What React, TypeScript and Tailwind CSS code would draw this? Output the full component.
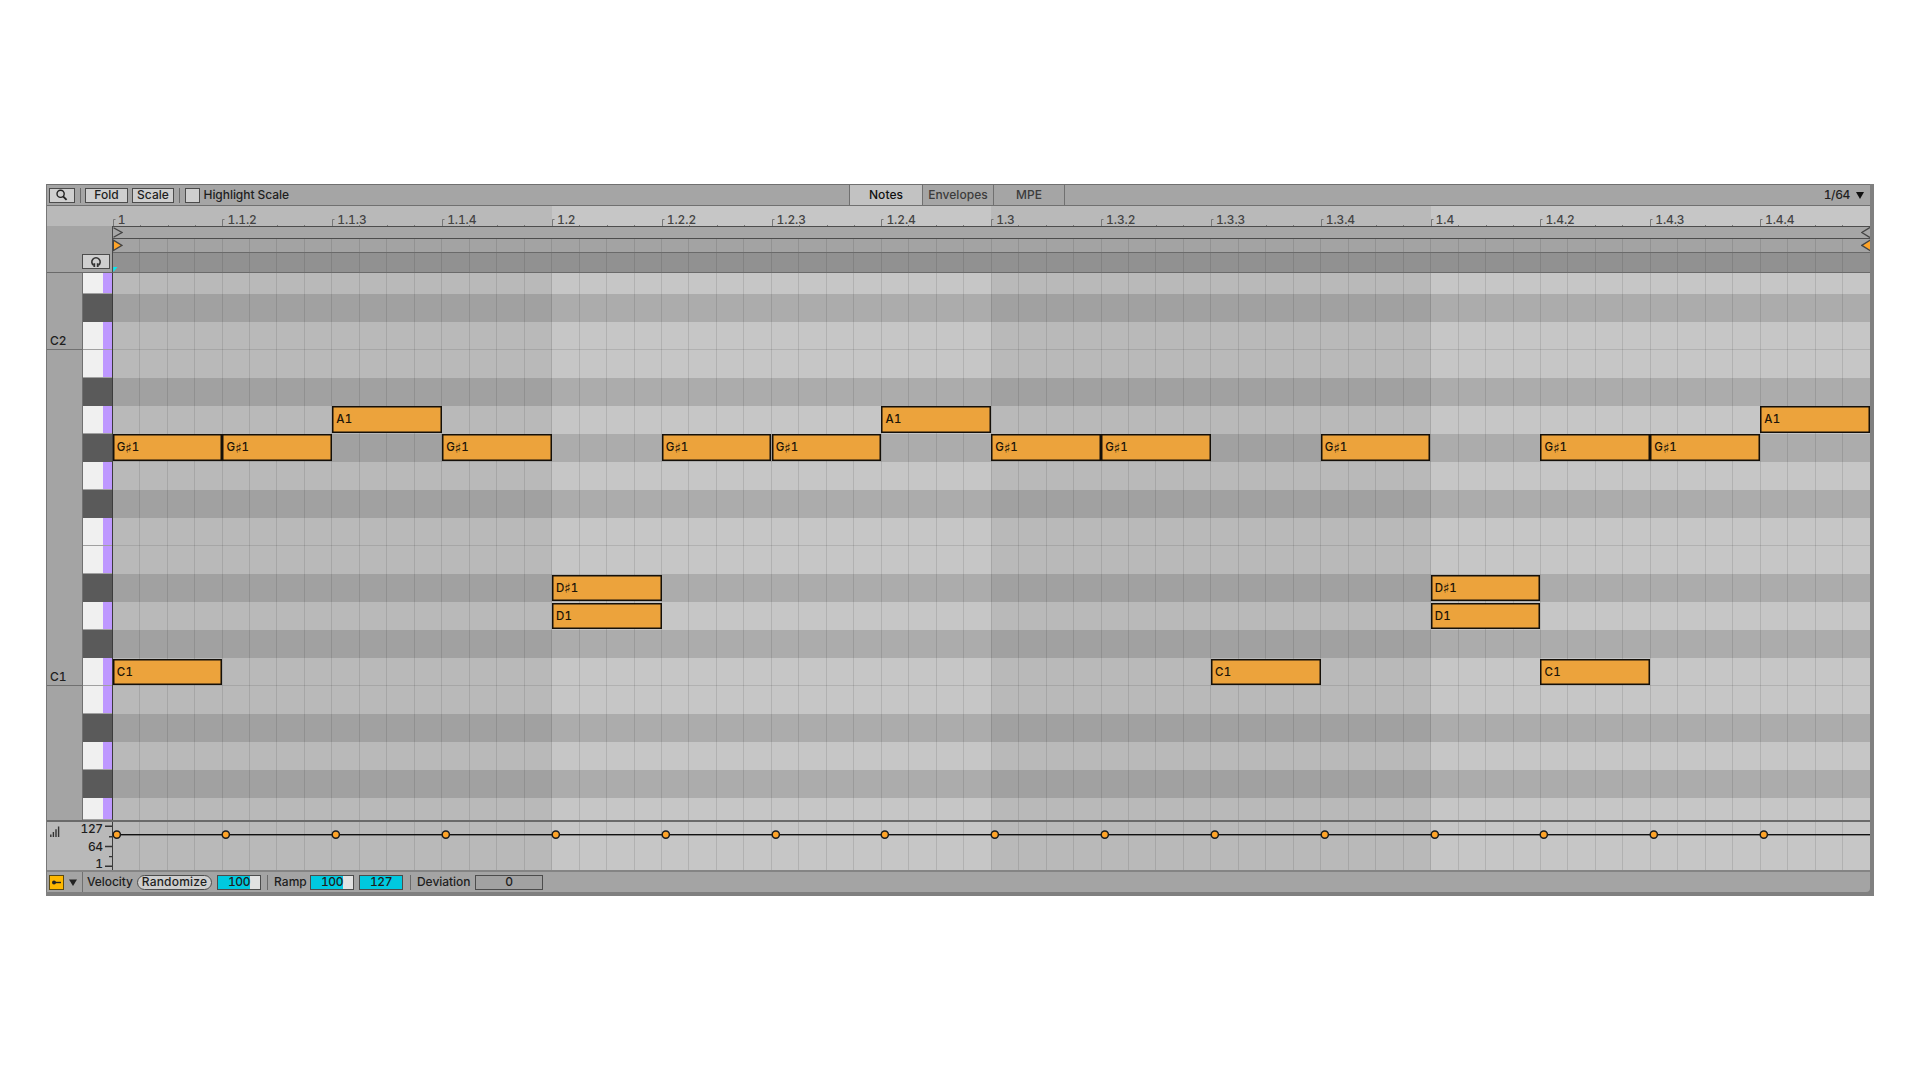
import type { ReactNode } from "react";

type Note = { name: string; row: number; step: number };

// y of the first full row and the height of one semitone, in px, inside the roll
const FIRST_ROW = 20.6;
const ROW_H = 28.06;
const STEPS = 16;

const ROWS = [
  { name: "D2", black: false },
  { name: "C#2", black: true },
  { name: "C2", black: false },
  { name: "B1", black: false },
  { name: "A#1", black: true },
  { name: "A1", black: false },
  { name: "G#1", black: true },
  { name: "G1", black: false },
  { name: "F#1", black: true },
  { name: "F1", black: false },
  { name: "E1", black: false },
  { name: "D#1", black: true },
  { name: "D1", black: false },
  { name: "C#1", black: true },
  { name: "C1", black: false },
  { name: "B0", black: false },
  { name: "A#0", black: true },
  { name: "A0", black: false },
  { name: "G#0", black: true },
  { name: "G0", black: false },
];

const rowIndex = (name: string) => ROWS.findIndex((r) => r.name === name) - 1;
const note = (name: string, step: number): Note => ({ name, row: rowIndex(name), step });

const NOTES: Note[] = [
  ...[0, 1, 3, 5, 6, 8, 9, 11, 13, 14].map((s) => note("G#1", s)),
  ...[2, 7, 15].map((s) => note("A1", s)),
  ...[4, 12].map((s) => note("D#1", s)),
  ...[4, 12].map((s) => note("D1", s)),
  ...[0, 10, 13].map((s) => note("C1", s)),
];

const LABELS = Array.from({ length: STEPS }, (_, i) => {
  const beat = Math.floor(i / 4) + 1;
  const sub = (i % 4) + 1;
  if (i === 0) return "1";
  return sub === 1 ? `1.${beat}` : `1.${beat}.${sub}`;
});

// neighbouring white keys without a black key between them get a hairline
const hasLine = (name: string) => name === "C2" || name === "F1" || name === "C1";
const rowHeight = (i: number) => (i === 0 ? FIRST_ROW : i === ROWS.length - 1 ? 21.3 : ROW_H);

function Divider({ className = "" }: { className?: string }) {
  return <div className={`h-[15px] w-px shrink-0 bg-[#6c6c6c] ${className}`} />;
}

function Button({ className = "", children }: { className?: string; children?: ReactNode }) {
  return (
    <button className={`flex h-[15px] shrink-0 items-center justify-center border border-[#4c4c4c] bg-[#cfcfcf] ${className}`}>
      {children}
    </button>
  );
}

function NumberBox({ value, fill, className = "" }: { value: string; fill: number; className?: string }) {
  return (
    <div className={`relative h-[15px] shrink-0 border border-[#4c4c4c] ${fill > 0 ? "bg-[#e2e2e2]" : "bg-[#a2a2a2]"} ${className}`}>
      <div className="h-full bg-[#00c9df]" style={{ width: `${fill}%` }} />
      <span className="absolute inset-0 flex items-center justify-center tracking-[-0.4px]">{value}</span>
    </div>
  );
}

function GridLines() {
  return (
    <div className="absolute inset-0 flex">
      {Array.from({ length: STEPS * 4 }, (_, i) => (
        <div key={i} className={i === 0 ? "flex-1" : "flex-1 border-l border-black/10"} />
      ))}
    </div>
  );
}

function Toolbar() {
  return (
    <div className="flex h-[22px] items-center border-y border-[#707070] bg-[#a5a5a5]">
      <div className="flex w-[802px] items-center pl-[2px]">
        <Button className="w-[26px]">
          <svg width="12" height="12" viewBox="0 0 12 12" fill="none" stroke="#222" strokeWidth="1.4">
            <circle cx="4.6" cy="4.8" r="3.6" />
            <path d="M7.1 7.3L10.6 10.8" strokeWidth="1.8" />
          </svg>
        </Button>
        <Divider className="ml-[5px]" />
        <Button className="ml-[4px] w-[43px]">Fold</Button>
        <Button className="ml-[4px] w-[42px]">Scale</Button>
        <Divider className="ml-[5px]" />
        <Button className="ml-[5px] w-[15px]" />
        <span className="ml-[3.5px] tracking-[-0.05px]">Highlight Scale</span>
      </div>
      <div className="flex h-full text-[#3c3c3c]">
        <div className="flex w-[73px] items-center justify-center border-l border-[#707070] bg-[#c2c2c2] text-[#111]">Notes</div>
        <div className="flex w-[71px] items-center justify-center border-l border-[#707070]">Envelopes</div>
        <div className="flex w-[72px] items-center justify-center border-x border-[#707070]">MPE</div>
      </div>
      <div className="ml-auto flex items-center gap-[6px] pr-[6px]">
        <span className="tracking-[-0.35px]">1/64</span>
        <svg width="8" height="7" viewBox="0 0 8 7">
          <path d="M0 0H8L4 7Z" fill="#111" />
        </svg>
      </div>
    </div>
  );
}

function Ruler() {
  return (
    <div className="flex h-[20px] bg-[#b9b9b9]">
      <div className="w-[65.65px]" />
      <div className="flex flex-1">
        {LABELS.map((label, i) => (
          <div key={label} className={`relative flex-1 text-[#444] ${Math.floor(i / 4) % 2 ? "bg-[#c6c6c6]" : "bg-[#b9b9b9]"}`}>
            <svg className="absolute bottom-0 left-0" width="109" height="7" viewBox="0 0 109 7" fill="none" stroke="#777">
              <path d="M0.5 7V0.5H2.5M27.5 6V7M55.5 6V7M82.5 6V7" />
            </svg>
            <span className="absolute left-[5px] top-[6px] leading-[15px] tracking-[-0.1px]">{label}</span>
          </div>
        ))}
      </div>
    </div>
  );
}

// loop brace, start/end markers and the scrub strip
function MarkerStrips() {
  return (
    <div className="flex h-[47px]">
      <div className="flex w-[65.65px] items-end justify-end border-b border-r border-b-[#6a6a6a] border-r-[#4a4a4a] bg-[#a4a4a4] pb-[3px] pr-[2px]">
        <Button className="w-[28px]">
          <svg width="12" height="12" viewBox="0 0 12 12" fill="none" stroke="#333" strokeWidth="1.6">
            <path d="M3.6 9.4A4.2 4.2 0 1 1 8.4 9.4" />
            <path d="M4.3 7.2V11M7.7 7.2V11" strokeWidth="1.8" />
          </svg>
        </Button>
      </div>
      <div className="flex-1">
        <div className="flex h-[13px] items-center justify-between border-y border-[#4d4d4d] bg-[#a6a6a6]">
          <svg width="10" height="11" viewBox="0 0 10 11" fill="none" stroke="#444" strokeWidth="1.3">
            <path d="M0.5 0.7L9 5.5L0.5 10.3" />
          </svg>
          <svg width="9" height="11" viewBox="0 0 9 11" fill="none" stroke="#444" strokeWidth="1.3">
            <path d="M9 0.4L0.8 5.5L9 10.6" />
          </svg>
        </div>
        <div className="relative flex h-[14px] items-start justify-between border-b border-[#6a6a6a] bg-[#a3a3a3]">
          <GridLines />
          <svg className="relative" width="10" height="13" viewBox="0 0 10 13" fill="#ffa428" stroke="#444" strokeWidth="1.4">
            <path d="M0.3 1.2L9 6.4L0.3 11.6Z" />
          </svg>
          <svg className="relative" width="9" height="13" viewBox="0 0 9 13" fill="#ffa428" stroke="#444" strokeWidth="1.4">
            <path d="M9.6 0.9L0.8 6.4L9.6 11.9" />
          </svg>
        </div>
        <div className="relative flex h-[20px] items-end border-b border-[#6a6a6a] bg-[#919191]">
          <GridLines />
          <svg className="relative" width="5" height="5" viewBox="0 0 5 5">
            <path d="M0.3 0H4.5L0.3 5Z" fill="#00ecf4" />
          </svg>
        </div>
      </div>
    </div>
  );
}

function Keyboard() {
  return (
    <div className="flex w-[65.65px] border-r border-[#3c3c3c]">
      <div className="flex w-[36px] flex-col border-r border-[#707070] bg-[#a4a4a4]">
        <div className="flex h-[77px] items-end border-b border-[#707070] pl-[3px] leading-[17px]">C2</div>
        <div className="flex h-[336px] items-end border-b border-[#707070] pl-[3px] leading-[17px]">C1</div>
      </div>
      <div className="flex-1">
        {ROWS.map((r, i) => (
          <div key={r.name} className="flex bg-[#5a5a5a]" style={{ height: rowHeight(i) }}>
            {!r.black && (
              <>
                <div className="flex-1 border-b border-[#a0a0a0] bg-[#f0f0f0]" />
                <div className="w-[9px] border-b border-[#a0a0a0] bg-[#be98ff]" />
              </>
            )}
          </div>
        ))}
      </div>
    </div>
  );
}

function NoteName({ name }: { name: string }) {
  const sharp = name.includes("#");
  return (
    <span className="flex h-[12px] items-center">
      {name[0]}
      {sharp && <span className="-mx-[0.5px] font-['DejaVu_Sans',sans-serif] text-[14px] font-bold leading-[12px]">♯</span>}
      {name[name.length - 1]}
    </span>
  );
}

function Roll() {
  return (
    <div className="relative flex-1">
      <div className="absolute inset-0 flex">
        {[0, 1, 2, 3].map((b) => (
          <div key={b} className={`flex-1 ${b % 2 ? "bg-[#c6c6c6]" : "bg-[#b9b9b9]"}`} />
        ))}
      </div>
      <div className="absolute inset-0">
        {ROWS.map((r, i) => (
          <div
            key={r.name}
            className={`${r.black ? "bg-black/13" : ""} ${hasLine(r.name) ? "border-b border-black/10" : ""}`}
            style={{ height: rowHeight(i) }}
          />
        ))}
      </div>
      <GridLines />
      {NOTES.map((n) => (
        <div
          key={`${n.name}-${n.step}`}
          className="absolute flex h-[26.5px] w-[calc(6.25%-0.3px)] items-center border border-[#14100a] bg-[#eca33c] pl-[3px] pt-px text-[11.5px] tracking-[0.3px] text-[#1c1408] shadow-[inset_0_0_0_0.5px_#14100a]"
          style={{ left: `${(n.step / STEPS) * 100}%`, top: FIRST_ROW + n.row * ROW_H + 0.5 }}
        >
          <NoteName name={n.name} />
        </div>
      ))}
    </div>
  );
}

function VelocityLane() {
  return (
    <div className="flex h-[52px] border-y-2 border-b-[#848484] border-t-[#6a6a6a]">
      <div className="flex w-[65.65px] justify-between border-r border-[#3c3c3c] bg-[#b9b9b9]">
        <svg className="ml-[3px] mt-[4px]" width="10" height="11" viewBox="0 0 10 11" stroke="#333" strokeWidth="1.4">
          <path d="M0.8 8.5V11M3.4 6V11M6 3.2V11M8.6 0.5V11" />
        </svg>
        <div className="flex">
          <div className="-mt-[2px] flex flex-col items-end pr-px leading-[17.7px] tracking-[-0.4px]">
            <span>127</span>
            <span>64</span>
            <span>1</span>
          </div>
          <svg width="8" height="47" viewBox="0 0 8 47" stroke="#333" strokeWidth="1.4">
            <path d="M1 4.3H8M5 14.8H8M1 24.5H8M5 34.6H8M1 44.2H8" />
          </svg>
        </div>
      </div>
      <div className="relative flex flex-1">
        {[0, 1, 2, 3].map((b) => (
          <div key={b} className={`flex-1 ${b % 2 ? "bg-[#c6c6c6]" : "bg-[#b9b9b9]"}`} />
        ))}
        <GridLines />
        <div className="absolute inset-x-0 top-[12px] h-px bg-[#111] shadow-[0_0.4px_0_#111]" />
        {LABELS.map((l, i) => (
          <svg
            key={l}
            className="absolute top-[8px] -ml-[1px]"
            style={{ left: `${(i / STEPS) * 100}%` }}
            width="10"
            height="10"
            viewBox="0 0 10 10"
          >
            <circle cx="4.8" cy="4.6" r="3.6" fill="#ffa428" stroke="#1c1c1c" strokeWidth="1.5" />
          </svg>
        ))}
      </div>
    </div>
  );
}

function Footer() {
  return (
    <div className="flex h-[20px] items-center rounded-br bg-[#a4a4a4]">
      <div className="flex h-full w-[36px] items-center border-r border-[#707070] pl-[2px]">
        <div className="flex h-[15px] w-[15px] items-center justify-center border border-[#5c4a10] bg-[#ffb800]">
          <svg width="11" height="7" viewBox="0 0 11 7">
            <path d="M3 3.5H10" stroke="#222" strokeWidth="1.4" />
            <circle cx="3" cy="3.5" r="2" fill="#222" />
          </svg>
        </div>
        <svg className="ml-[5px]" width="8" height="7" viewBox="0 0 8 7">
          <path d="M0 0.5H8L4 7Z" fill="#222" />
        </svg>
      </div>
      <span className="ml-[4px] w-[50px] tracking-[-0.05px]">Velocity</span>
      <button className="flex h-[15px] w-[75px] items-center justify-center rounded-full border border-[#4c4c4c] bg-[#cfcfcf] tracking-[0.2px]">
        Randomize
      </button>
      <NumberBox className="ml-[5px] w-[44px]" value="100" fill={77} />
      <Divider className="ml-[6px]" />
      <span className="ml-[6px] w-[36px]">Ramp</span>
      <NumberBox className="w-[44px]" value="100" fill={77} />
      <NumberBox className="ml-[5px] w-[44px]" value="127" fill={100} />
      <Divider className="ml-[7px]" />
      <span className="ml-[6px] w-[58px] tracking-[-0.05px]">Deviation</span>
      <NumberBox className="w-[68px]" value="0" fill={0} />
    </div>
  );
}

export default function App() {
  return (
    <main className="h-[1080px] w-[1920px] bg-white pl-[46px] pt-[184px] font-['Inter','Liberation_Sans',sans-serif] text-[12px] font-medium leading-none tabular-nums tracking-[0.05px] text-[#1e1e1e]">
      <div className="h-[712px] w-[1828px] bg-[#808080] pr-[4px]">
        <div className="border-l border-[#777]">
          <Toolbar />
          <Ruler />
          <MarkerStrips />
          <div className="flex h-[547px] overflow-hidden">
            <Keyboard />
            <Roll />
          </div>
          <VelocityLane />
          <Footer />
        </div>
      </div>
    </main>
  );
}
